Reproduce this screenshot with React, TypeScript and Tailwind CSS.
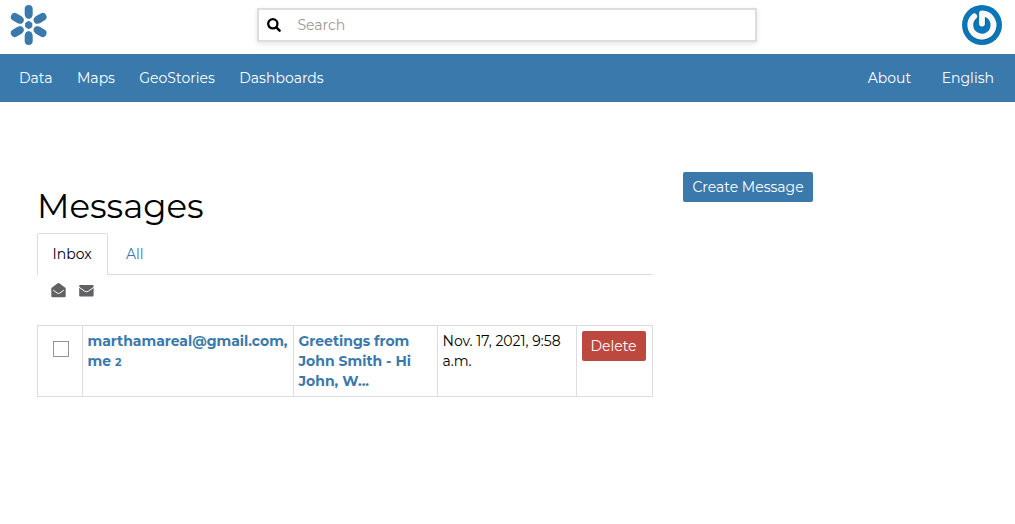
import type { ReactNode } from 'react';

const petals = [0, 60, 120, 180, 240, 300];

function Logo() {
  return (
    <svg className="ml-[9px] size-10" viewBox="0 0 40 40" fill="#3a79ab">
      {petals.map((angle) => (
        <path
          key={angle}
          transform={`rotate(${angle} 19.7 20)`}
          d="M15.700 3.800C15.700 1.400 17.300 0 19.700 0s4 1.400 4 3.800v5.200c0 1-.3 1.900-.7 2.800-.7 1.400-1.700 2-3.300 2s-2.600-.6-3.300-2c-.4-.9-.7-1.800-.7-2.800z"
        />
      ))}
      <path d="M19.700 15.800l3.600 2.100v4.200l-3.600 2.100-3.600-2.100v-4.200z" />
    </svg>
  );
}

function Avatar() {
  return (
    <svg className="mr-[13px] size-10" viewBox="0 0 40 40">
      <defs>
        <filter id="soft" x="-20%" y="-20%" width="140%" height="140%">
          <feDropShadow dx="0.4" dy="0.8" stdDeviation="0.7" floodColor="#03406c" floodOpacity="0.6" />
        </filter>
      </defs>
      <circle cx="20" cy="20" r="20" fill="#0a76b8" />
      <path
        d="M12.200 11.300a11.600 11.600 0 1 0 7.800-2.900V18.500"
        fill="none"
        stroke="#f8f8f8"
        strokeWidth="5.800"
        strokeLinecap="round"
        strokeLinejoin="round"
        filter="url(#soft)"
      />
    </svg>
  );
}

function SearchIcon() {
  return (
    <svg className="ml-[8px] size-[14px]" viewBox="0 0 13 13" fill="none" stroke="#000">
      <circle cx="5.400" cy="5.400" r="4.300" strokeWidth="2.100" />
      <path d="M8.700 8.700l3 3" strokeWidth="2.300" strokeLinecap="round" />
    </svg>
  );
}

function OpenEnvelope() {
  return (
    <svg className="size-[15px]" viewBox="0 0 15 15">
      <path d="M.3 5.500Q.3 5 .7 4.700L6.300.5q1.200-.9 2.400 0l5.600 4.200q.4.3.4.8V13q0 1.300-1.300 1.300H1.600Q.3 14.300.3 13z" fill="#626063" />
      <path d="M2.200 7.200l3.900 2.800q1.400 1 2.800 0l3.900-2.800" fill="none" stroke="#fff" strokeWidth="1" />
    </svg>
  );
}

function ClosedEnvelope() {
  return (
    <svg className="h-[12px] w-[15px]" viewBox="0 0 15 12">
      <rect x=".2" width="14.400" height="11.500" rx="1" fill="#626063" />
      <path d="M0 2.200l5.700 4q1.800 1.200 3.600 0L15 2.200" fill="none" stroke="#fff" strokeWidth="1" />
    </svg>
  );
}

function Cell({ className, children }: { className: string; children: ReactNode }) {
  return <div className={`shrink-0 border-l border-[#ddd] pt-[5px] ${className}`}>{children}</div>;
}

export default function App() {
  return (
    <div className="h-[524px] w-[1015px] overflow-hidden bg-white font-[Montserrat,Inter,sans-serif] text-[14px] leading-5 font-normal text-black">
      <header className="flex h-[54px] items-start pt-[5px]">
        <Logo />
        <div className="mt-[3px] ml-[208px] flex h-[34px] w-[500px] items-center border-2 border-[#ddd] shadow-[0_2px_5px_rgba(0,0,0,0.1)]">
          <SearchIcon />
          <span className="ml-[16.500px] text-[#999]">Search</span>
        </div>
        <div className="ml-auto"><Avatar /></div>
      </header>

      <nav className="flex h-12 items-center bg-[#3a79ab] pl-[19px] text-white">
        <a className="w-[58px]">Data</a>
        <a className="w-[62.300px]">Maps</a>
        <a className="w-[100px]">GeoStories</a>
        <a>Dashboards</a>
        <a className="ml-auto w-[74px]">About</a>
        <a className="w-[73.300px]">English</a>
      </nav>

      <main className="flex pl-[37px]">
        <section className="w-[616px] pt-[84px]">
          <h1 className="h-[47px] text-[34px] leading-[40px]">Messages</h1>
          <div className="flex h-[42px] items-stretch">
            <a className="flex w-[71px] items-start rounded-t-[2px] border border-b-0 border-[#ddd] pt-[10px] pl-[14.600px]">Inbox</a>
            <a className="flex grow items-start border-b border-[#ddd] pt-[11px] pl-[18px] text-[#3a79ab]">All</a>
          </div>
          <div className="flex h-[50px] gap-[13px] pt-[8px] pl-[14px]">
            <OpenEnvelope />
            <div className="pt-[2px]"><ClosedEnvelope /></div>
          </div>
          <div className="flex h-[72px] border-y border-r border-[#ddd]">
            <Cell className="w-[45px]">
              <div className="mt-[10px] ml-[15px] size-4 border border-[#949494] bg-white" />
            </Cell>
            <Cell className="w-[211px] pl-[4.500px] font-bold text-[#3a79ab]">
              <div className="whitespace-nowrap">marthamareal@gmail.com,</div>
              <div>me <span className="text-[11px]">2</span></div>
            </Cell>
            <Cell className="w-[144px] pl-[4.500px] font-bold text-[#3a79ab]">
              <div>Greetings from</div>
              <div>John Smith - Hi</div>
              <div>John, W...</div>
            </Cell>
            <Cell className="w-[139px] pl-[4.500px]">
              <div className="whitespace-nowrap">Nov. 17, 2021, 9:58</div>
              <div>a.m.</div>
            </Cell>
            <Cell className="w-[76px] pl-[5px]">
              <button className="block h-[30px] w-16 rounded-[2px] bg-[#bc4840] pr-px text-white">Delete</button>
            </Cell>
          </div>
        </section>
        <aside className="pt-[70px] pl-[30px]">
          <button className="block h-[30px] w-[130px] rounded-[2px] bg-[#3a79ab] whitespace-nowrap text-white">Create Message</button>
        </aside>
      </main>
    </div>
  );
}
